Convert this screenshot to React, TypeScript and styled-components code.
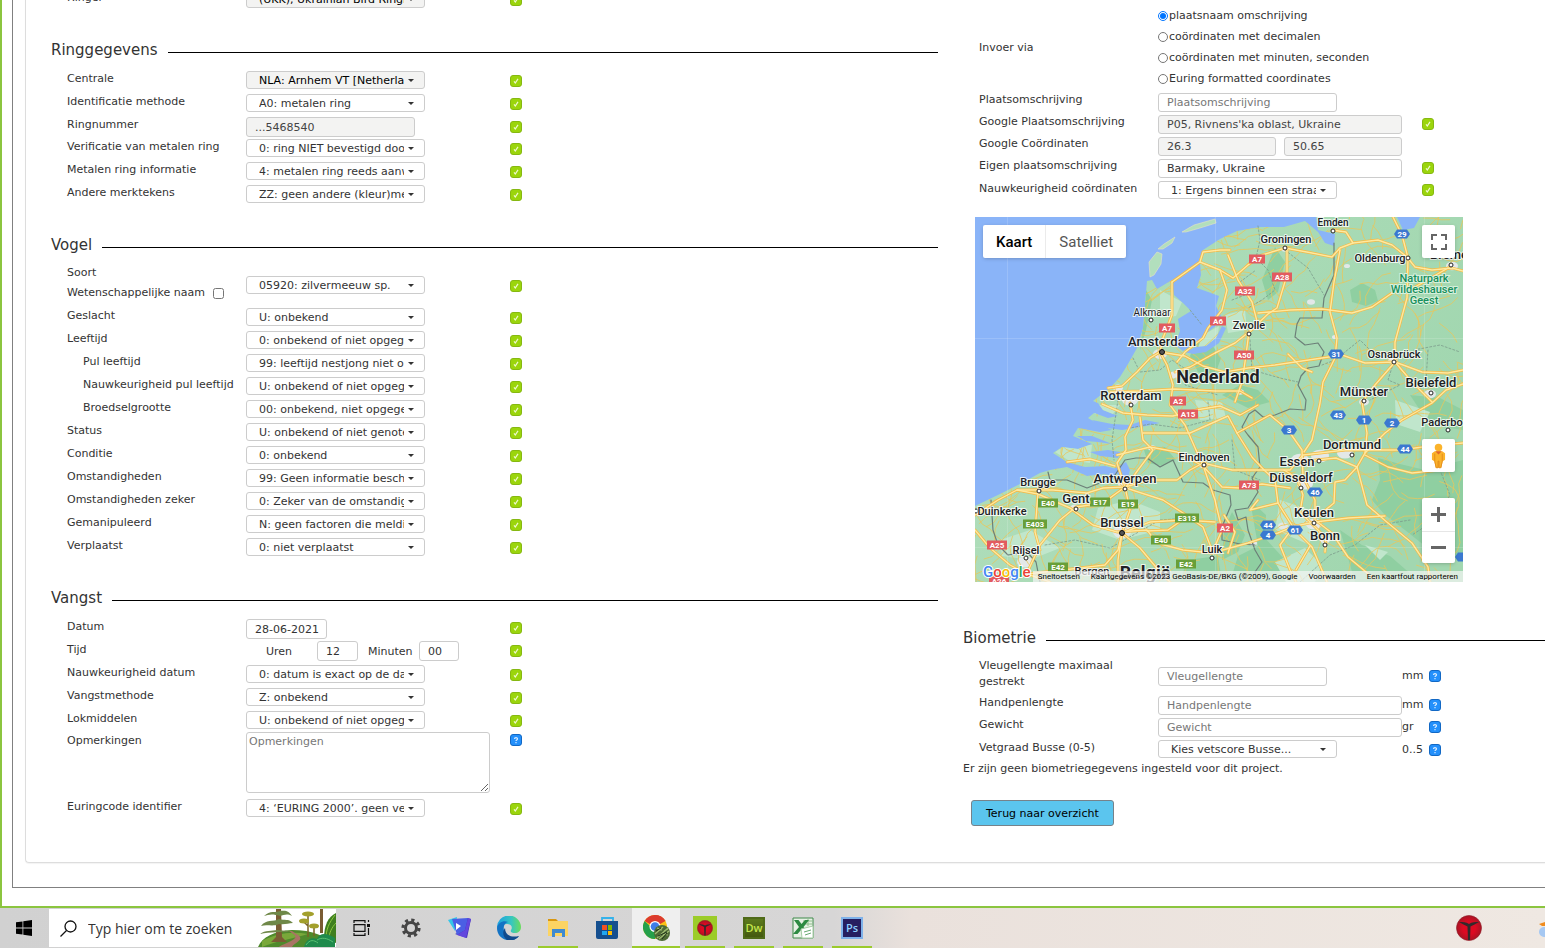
import React, { useId } from "react";
import styled, { createGlobalStyle, css } from "styled-components";

const GlobalStyle = createGlobalStyle`
  *, *::before, *::after { box-sizing: border-box; }
  body { margin: 0; background: #fff; overflow: hidden; }
  body, input, select, textarea, button {
    font-family: Verdana, "DejaVu Sans", sans-serif;
    font-size: 11px;
    color: #333;
  }
`;

const Screen = styled.div`
  display: flex;
  flex-direction: column;
  height: 100vh;
`;

const Site = styled.main`
  flex: 1;
  min-height: 0;
  overflow: hidden;
  display: flex;
  flex-direction: column;
  justify-content: flex-end;
  padding: 0 0 18px 10px;
  border: solid #8bc53f;
  border-width: 0 0 2px 2px;
`;

const Frame = styled.div`
  padding: 0 0 24px 12px;
  border: solid #808080;
  border-width: 0 0 1px 1px;
`;

const Card = styled.div`
  display: grid;
  grid-template-columns: minmax(0, 1fr) 582px;
  column-gap: 25px;
  padding: 0 0 43px 25px;
  border: solid #ddd;
  border-width: 0 0 1px 1px;
  border-radius: 0 0 0 4px;
  box-shadow: 0 1px 1px rgba(0, 0, 0, 0.05);
`;

const Column = styled.div`
  display: flex;
  flex-direction: column;
`;

const LeftColumn = styled(Column)`
  gap: 30px;
`;

const RightColumn = styled(Column)`
  justify-content: flex-end;
`;

const Heading = styled.h2`
  display: flex;
  align-items: flex-start;
  gap: 10px;
  height: 20px;
  margin: 0 0 8px;
  font-size: 15px;
  font-weight: 400;
  line-height: 20px;

  &::after {
    content: "";
    flex: 1;
    margin-top: 12px;
    border-top: 1px solid #000;
  }
`;

const Row = styled.div<{ $h?: number }>`
  display: grid;
  grid-template-columns: 179px 264px auto;
  justify-content: start;
  align-items: start;
  height: ${(p) => p.$h ?? 23}px;
  padding-left: 16px;
`;

const Label = styled.label<{ $sub?: boolean; $narrow?: boolean; $top?: number }>`
  line-height: ${(p) => (p.$narrow ? 16 : 20)}px;
  padding-top: ${(p) => p.$top ?? 1}px;
  padding-left: ${(p) => (p.$sub ? 16 : 0)}px;
  padding-right: ${(p) => (p.$narrow ? 24 : 0)}px;
  white-space: ${(p) => (p.$narrow ? "normal" : "nowrap")};
`;

const CheckLabel = styled(Label)`
  display: flex;
  align-items: center;
  gap: 8px;
  input { width: 11px; height: 11px; margin: 0; }
`;

const Control = styled.div<{ $top?: number; $gap?: number }>`
  display: flex;
  align-items: center;
  gap: ${(p) => p.$gap ?? 0}px;
  padding-top: ${(p) => p.$top ?? 3}px;
`;

const boxed = css`
  border: 1px solid #ccc;
  border-radius: 3px;
  background: #fff;
  outline: none;
  &:disabled { background: #f3f3f2; opacity: 1; }
`;

const TextInput = styled.input<{ $w: number; $h?: number }>`
  ${boxed}
  width: ${(p) => p.$w}px;
  height: ${(p) => p.$h ?? 19}px;
  padding: 0 0 0 8px;
  &::placeholder { color: #777; opacity: 1; }
  &:disabled { color: #444; }
`;

const TextArea = styled.textarea`
  ${boxed}
  width: 244px;
  height: 61px;
  padding: 2px;
  resize: both;
  &::placeholder { color: #777; opacity: 1; }
`;

const SelectBox = styled.span`
  position: relative;
  display: inline-flex;

  &::after {
    content: "";
    position: absolute;
    right: 11px;
    top: 8px;
    border: solid transparent;
    border-width: 3px 3px 0;
    border-top-color: #333;
    pointer-events: none;
  }
`;

const NativeSelect = styled.select`
  ${boxed}
  appearance: none;
  width: 179px;
  height: 18px;
  padding: 0 20px 0 12px;
  &:disabled { color: #000; }
`;

const Badge = styled.svg<{ $top: number }>`
  display: block;
  width: 12px;
  height: 12px;
  margin-top: ${(p) => p.$top}px;
`;

const UnitCell = styled.div<{ $top: number }>`
  display: grid;
  grid-template-columns: 27px 12px;
  margin-left: -20px;
  padding-top: ${(p) => p.$top}px;
  line-height: 20px;
`;

function Tick({ top = 6 }: { top?: number }) {
  return (
    <Badge $top={top} viewBox="0 0 12 12" role="img" aria-label="Geldig">
      <rect x="0.5" y="0.5" width="11" height="11" rx="2.5" fill="#9bd50c" stroke="#86b812" />
      <path d="M4 6.4 5.3 8 8 3.9" fill="none" stroke="#eef9cf" strokeWidth="1.2" />
    </Badge>
  );
}

function Help({ top = 4 }: { top?: number }) {
  return (
    <Badge $top={top} viewBox="0 0 12 12" role="img" aria-label="Help">
      <rect x="0.5" y="0.5" width="11" height="11" rx="2.5" fill="#2490fb" stroke="#1268c4" />
      <path d="M4.5 5C4.5 3.2 7.5 3.2 7.5 4.8 7.500 6 6 5.900 6 7M6 8v1.200" fill="none" stroke="#d9ecff" strokeWidth="1.200" />
    </Badge>
  );
}

function SelectField({ id, value, disabled }: { id: string; value: string; disabled?: boolean }) {
  return (
    <SelectBox>
      <NativeSelect id={id} disabled={disabled} defaultValue={value}>
        <option>{value}</option>
      </NativeSelect>
    </SelectBox>
  );
}

type SelectRowProps = { label: string; value: string; sub?: boolean; disabled?: boolean; h?: number; tickTop?: number };

function SelectRow({ label, value, sub, disabled, h, tickTop = 7 }: SelectRowProps) {
  const id = useId();
  return (
    <Row $h={h}>
      <Label htmlFor={id} $sub={sub}>{label}</Label>
      <Control><SelectField id={id} value={value} disabled={disabled} /></Control>
      <Tick top={tickTop} />
    </Row>
  );
}

type InputRowProps = { label: string; value?: string; width: number; disabled?: boolean; tick?: boolean; unit?: string; h?: number };

function InputRow({ label, value, width, disabled, tick, unit, h = 22 }: InputRowProps) {
  const id = useId();
  return (
    <Row $h={h}>
      <Label htmlFor={id}>{label}</Label>
      <Control $top={4}>
        <TextInput id={id} $w={width} defaultValue={value} placeholder={label} disabled={disabled} />
      </Control>
      {tick && <Tick top={7} />}
      {unit && <UnitCell $top={3}>{unit}<Help /></UnitCell>}
    </Row>
  );
}

/* ---------- Location ---------- */

const RadioGroup = styled.fieldset`
  display: grid;
  grid-template-columns: 179px auto;
  justify-content: start;
  align-items: center;
  margin: 0;
  padding: 0 0 0 16px;
  border: 0;
`;

const RadioList = styled.div`
  display: flex;
  flex-direction: column;
`;

const RadioLabel = styled.label`
  display: flex;
  align-items: center;
  height: 21px;
  input { width: 10px; height: 10px; margin: 0 1px 0 0; }
`;

const MapBox = styled.div`
  position: relative;
  width: 488px;
  height: 365px;
  margin: 16px 0 46px 12px;
  overflow: hidden;
  background: #8ab4f8;
  font-family: Roboto, sans-serif;
`;

const MapArt = styled.svg`
  display: block;
  width: 100%;
  height: 100%;
`;

const mapControl = css`
  position: absolute;
  background: #fff;
  border-radius: 2px;
  box-shadow: 0 1px 4px -1px rgba(0, 0, 0, 0.3);
`;

const MapTypes = styled.div`
  ${mapControl}
  top: 8px;
  left: 8px;
  display: flex;
`;

const MapTypeButton = styled.button<{ $active?: boolean }>`
  height: 33px;
  padding: 0 13px;
  border: 0;
  border-left: ${(p) => (p.$active ? "0" : "1px solid #ebebeb")};
  background: none;
  font-family: Roboto, sans-serif;
  font-size: 15px;
  font-weight: ${(p) => (p.$active ? 500 : 400)};
  color: ${(p) => (p.$active ? "#000" : "#565656")};
`;

const MapTools = styled.div<{ $top: number }>`
  ${mapControl}
  top: ${(p) => p.$top}px;
  right: 8px;
  width: 33px;
`;

const ToolButton = styled.button`
  display: flex;
  align-items: center;
  justify-content: center;
  width: 33px;
  height: 33px;
  padding: 0;
  border: 0;
  background: none;
  & + & { height: 32px; box-shadow: inset 0 1px #e6e6e6; }
`;

const Attribution = styled.div`
  position: absolute;
  right: 0;
  bottom: 0;
  display: flex;
  gap: 1px;
  height: 11px;
  line-height: 11px;
  background: rgba(245, 245, 245, 0.7);

  a {
    padding: 0 5px;
    color: #000;
    font-size: 8px;
    text-decoration: none;
  }
`;

const LAND =
  "M975 506 1000 494 1020 484 1040 473 1050 470 1067 467 1087 476 1104 474 1114 476 1120 470 1105 466 1085 467 1067 462 1053 453 1062 447 1078 449 1092 444 1073 436 1078 428 1100 432 1112 430 1098 424 1088 418 1094 413 1108 418 1118 416 1103 410 1098 403 1093 401 1110 388 1120 377 1128 364 1137 348 1143 328 1145 305 1147 281 1152 280 1157 289 1167 283 1180 276 1198 263 1203 250 1220 239 1237 231 1260 227 1284 227 1305 221 1318 232 1325 243 1334 246 1335 234 1318 230 1316 217 1397 217 1403 230 1414 228 1420 217 1463 217V582H975Z";

const LAKES = [
  "M1172 282 1200 263 1201 275 1197 288 1211 293 1219 296 1216 306 1221 316 1216 326 1206 333 1196 343 1183 351 1175 345 1180 331 1178 319 1191 311 1183 303 1174 295Z",
  "M1184 352 1196 347 1206 346 1216 338 1222 326 1226 328 1219 343 1206 352 1193 354Z",
  "M1077 436 1092 436 1112 444 1098 442 1086 441Z",
  "M1092 420 1112 424 1130 425 1145 420 1160 423 1146 426 1122 430 1100 427Z",
  "M1120 452 1108 450 1090 452 1100 456 1118 458Z",
  "M1112 470 1126 462 1130 470 1127 482 1121 477Z",
];

const ISLANDS = [
  "M1150 277 1149 262 1157 252 1162 254 1161 264 1154 275Z",
  "M1158 249 1164 244 1175 237 1172 243 1163 249Z",
  "M1182 232 1194 225 1215 219 1216 223 1200 228 1186 232Z",
];

const FORESTS = [
  "M1350 290 1362 283 1375 290 1378 301 1366 306 1352 302Z",
  "M1378 458 1400 464 1425 470 1463 460V560L1430 550 1405 530 1385 515 1372 500 1380 480Z",
  "M1196 342 1212 345 1221 358 1214 378 1198 372 1190 356Z",
  "M1250 500 1266 515 1265 538 1285 560 1310 582H1230L1238 556 1258 546Z",
  "M1340 530 1362 545 1390 556 1420 582H1355Z",
  "M1144 450 1165 447 1176 460 1162 466 1148 463Z",
  "M1222 395 1240 385 1258 390 1270 402 1248 408Z",
  "M1410 395 1440 398 1463 410V430L1430 425Z",
  "M1232 512 1245 535 1238 552 1222 560 1224 530Z",
  "M1187 560 1218 556 1222 582H1180Z",
  "M1275 247 1285 262 1278 292 1268 300 1262 280Z",
  "M1146 290 1152 300 1146 330 1140 350 1144 318Z",
];

const PALE = [
  "M1055 452 1075 440 1092 445 1090 463 1068 460Z",
  "M1090 405 1120 405 1112 415 1095 414Z",
  "M1203 335 1219 326 1217 342 1196 352Z",
  "M1160 290 1182 302 1176 316 1160 318Z",
  "M1225 315 1245 310 1247 330 1228 333Z",
  "M1098 508 1130 500 1160 512 1160 530 1120 540 1092 530Z",
  "M1280 500 1310 510 1310 545 1275 530Z",
  "M1275 562 1305 548 1322 565 1315 582H1286Z",
  "M1365 545 1388 552 1380 560Z",
  "M1195 400 1222 402 1226 418 1200 420Z",
  "M1395 400 1430 412 1420 432 1396 424Z",
  "M1000 540 1030 530 1060 548 1030 560 1002 556Z",
];

const HIGHWAYS = [
  "M1172 282 1172 315 1163 338 1160 352 1150 358 1137 372 1122 386 1108 388",
  "M1172 282 1200 262 1203 252 1220 250 1230 250M1200 262 1220 270 1233 278 1248 265 1262 255 1285 248 1312 253 1332 257 1340 248 1353 243 1378 240 1392 245 1407 257 1415 267 1432 270 1452 268 1463 271",
  "M1332 230 1346 232 1353 243M1340 250 1334 282 1330 312 1337 338 1335 358 1323 382 1320 403 1312 440 1304 452",
  "M1287 248 1287 275 1277 308 1268 314 1249 332 1235 343 1215 353 1190 367 1175 372",
  "M1258 313 1290 310 1322 309 1352 313 1372 307 1392 293 1415 287 1448 268",
  "M1160 352 1185 356 1203 366 1225 372 1248 368 1275 365 1322 358 1342 355 1365 363 1395 362 1422 372 1448 373 1463 370",
  "M1393 217 1402 235 1408 258 1407 298 1395 342 1395 362 1412 382 1432 402",
  "M1395 362 1375 385 1362 402 1367 433 1365 453 1357 467 1367 505 1388 523 1412 543 1428 567 1430 582",
  "M1228 255 1238 280 1252 302 1258 325 1249 332 1245 362 1242 382 1235 402",
  "M1220 270 1227 290 1222 310 1208 328 1203 338 1185 352 1177 362",
  "M1160 352 1167 365 1173 385 1170 405 1185 425 1196 450 1204 468 1215 500 1222 530 1212 553",
  "M1110 392 1140 391 1175 389 1215 391 1240 391 1252 398",
  "M1102 404 1123 413 1147 415 1173 416 1196 410 1220 406 1240 415 1258 405",
  "M1130 403 1133 420 1125 437 1126 450 1117 463 1125 487 1130 510 1122 533 1118 560 1118 582",
  "M1140 417 1143 440 1153 450 1138 470 1126 487",
  "M1067 462 1090 459 1115 466M1117 455 1150 447 1177 452 1203 466",
  "M1143 433 1190 433 1210 424 1228 416 1237 433 1252 457 1264 470",
  "M975 515 998 500 1017 490 1053 490 1087 493 1103 488 1125 487 1150 480 1177 480 1190 470 1203 463 1232 470 1290 470 1303 455 1345 450 1380 450 1400 450 1430 446 1463 443",
  "M1126 488 1163 500 1183 513 1203 527 1212 550",
  "M1017 490 1038 494 1070 508 1093 525 1117 532 1147 530 1157 543 1183 550 1212 553 1248 543 1278 533 1295 526 1315 522 1348 518 1385 516",
  "M1125 487 1103 503 1076 507 1060 520 1040 545 1027 573",
  "M1038 492 1035 532 1040 550M1027 574 1063 570 1105 565 1118 550 1122 533 1150 522 1183 520 1215 522",
  "M975 530 990 548 1010 565 1027 574 1050 582",
  "M1122 533 1140 548 1160 572 1170 582M1147 531 1168 530 1188 516",
  "M1237 433 1270 415 1288 430 1302 450 1303 477 1315 500 1315 520 1332 533 1348 557 1372 577",
  "M1264 470 1275 480 1278 503 1295 530 1312 547 1327 582",
  "M1284 470 1297 478 1303 495 1300 512 1312 524 1326 538 1325 552",
  "M1290 462 1316 460 1336 458 1357 467 1345 480 1335 482 1334 503 1318 516",
  "M1365 455 1388 467 1412 473 1440 470M1365 453 1385 433 1402 420 1432 403 1446 390 1463 384",
  "M1295 525 1280 545 1290 570 1296 582M1310 546 1296 570",
  "M1203 466 1222 487 1240 488 1262 484 1290 488M1228 553 1235 532 1224 515",
  "M1288 354 1302 368 1312 372M1258 500 1250 510 1278 503",
];

const BORDERS = [
  "M1334 243 1334 275 1324 298 1322 318 1300 318 1297 324 1295 337 1305 345 1318 343 1324 352 1319 366 1308 368 1301 376 1298 385 1306 400 1305 410 1290 409 1275 415 1263 417 1255 410 1249 414 1242 427 1248 435 1258 447 1260 467 1252 478 1258 492 1248 508 1235 510 1238 520 1246 517 1248 530 1255 550 1262 562 1255 572 1257 582",
  "M1048 472 1050 480 1067 480 1087 488 1113 478 1125 460 1136 458 1147 458 1160 467 1173 460 1183 482 1203 483 1213 490 1230 495 1231 505 1222 527 1222 540 1240 544 1255 545",
  "M991 500 993 530 998 545 1008 555 1027 552 1036 562 1040 582",
];

const PROVINCES = [
  "M1258 226 1260 240 1256 258 1268 270 1275 290 1262 300 1248 308",
  "M1285 250 1308 268 1324 295M1232 300 1245 295 1240 282 1256 270",
  "M1133 358 1140 372 1160 370 1172 360 1187 370 1185 385 1218 395",
  "M1250 340 1252 370 1280 378 1298 382M1208 402 1210 420 1180 428 1150 424 1130 428",
  "M1322 365 1335 360 1360 340 1372 352 1395 358 1388 380 1400 385 1370 400",
  "M1414 350 1440 345 1460 352M1426 380 1428 350",
  "M1118 400 1112 440 1114 460M1045 545 1075 540 1110 548 1160 520 1190 518",
  "M1232 440 1235 470 1260 480M1300 582 1330 555 1355 545 1380 525 1410 520",
  "M1440 470 1450 495 1435 520 1412 535",
  "M1190 310 1202 325",
];

/* Fixed-seed generator: the fine road mesh is the same on every load. */
function minorRoads(): string {
  let seed = 71;
  const next = () => {
    seed = (seed * 16807) % 2147483647;
    return seed / 2147483647;
  };
  let d = "";
  for (let i = 0; i < 480; i++) {
    let x = 975 + next() * 488;
    let y = 217 + next() * 365;
    let angle = next() * Math.PI * 2;
    d += `M${x.toFixed(1)} ${y.toFixed(1)}`;
    const steps = 3 + Math.floor(next() * 4);
    for (let s = 0; s < steps; s++) {
      angle += (next() - 0.5) * 1.1;
      x += Math.cos(angle) * 9;
      y += Math.sin(angle) * 9;
      d += `L${x.toFixed(1)} ${y.toFixed(1)}`;
    }
  }
  return d;
}

const MINOR = minorRoads();

const URBAN: [number, number, number][] = [
  [1160, 354, 7], [1130, 400, 8], [1118, 388, 5], [1174, 375, 5], [1125, 484, 7], [1122, 532, 9], [1075, 508, 5],
  [1300, 460, 9], [1320, 456, 9], [1345, 453, 8], [1305, 484, 8], [1314, 524, 8], [1325, 540, 5], [1283, 526, 5],
  [1393, 361, 5], [1364, 402, 5], [1430, 394, 6], [1452, 266, 6], [1285, 249, 4], [1204, 465, 5], [1152, 448, 4],
  [1025, 562, 8], [1212, 552, 4], [1240, 392, 4], [1311, 302, 4], [1347, 266, 3], [1253, 543, 4], [1335, 337, 3],
];

type Shield = [string, number, number, "nl" | "be" | "de"];
const SHIELDS: Shield[] = [
  ["A7", 1257, 259, "nl"], ["A28", 1282, 277, "nl"], ["A32", 1245, 291, "nl"], ["A7", 1167, 328, "nl"],
  ["A6", 1218, 321, "nl"], ["A50", 1244, 355, "nl"], ["A2", 1178, 401, "nl"], ["A15", 1188, 414, "nl"],
  ["A73", 1249, 485, "nl"], ["A2", 1225, 528, "nl"], ["A25", 997, 545, "nl"], ["A26", 999, 581, "nl"],
  ["E40", 1048, 503, "be"], ["E17", 1100, 502, "be"], ["E19", 1128, 504, "be"], ["E403", 1035, 524, "be"],
  ["E313", 1187, 518, "be"], ["E40", 1161, 540, "be"], ["E42", 1058, 567, "be"], ["E42", 1186, 564, "be"],
  ["29", 1402, 234, "de"], ["31", 1336, 354, "de"], ["43", 1338, 415, "de"], ["1", 1364, 420, "de"],
  ["2", 1392, 423, "de"], ["3", 1289, 430, "de"], ["44", 1405, 449, "de"], ["46", 1315, 492, "de"],
  ["44", 1268, 525, "de"], ["4", 1268, 535, "de"], ["61", 1295, 530, "de"], ["", 1463, 557, "de"],
];

type Place = [string, number, number, number, number, number?, number?];
/* name, text centre x, baseline y, size, weight, dot x, dot y */
const PLACES: Place[] = [
  ["Emden", 1333, 226, 10, 500, 1333, 231], ["Groningen", 1286, 243, 11, 500, 1285, 248],
  ["Oldenburg", 1380, 262, 11, 500, 1408, 258], ["Breme", 1449, 259, 13, 500, 1451, 265],
  ["Alkmaar", 1152, 316, 10, 400, 1151, 320], ["Amsterdam", 1162, 346, 13, 500, 1162, 352],
  ["Zwolle", 1249, 329, 11, 500, 1249, 334], ["Nederland", 1218, 383, 18, 700],
  ["Rotterdam", 1131, 400, 13, 500, 1131, 405], ["Osnabrück", 1394, 358, 11, 500, 1394, 362],
  ["Bielefeld", 1431, 387, 13, 500, 1431, 393], ["Münster", 1364, 396, 13, 500, 1364, 401],
  ["Paderbo", 1442, 426, 11, 500, 1448, 430], ["Dortmund", 1352, 449, 13, 500, 1352, 455],
  ["Essen", 1297, 466, 13, 500, 1319, 461], ["Düsseldorf", 1301, 482, 13, 500, 1301, 488],
  ["Keulen", 1314, 517, 13, 500, 1314, 523], ["Bonn", 1325, 540, 13, 500, 1325, 545],
  ["Eindhoven", 1204, 461, 11, 500, 1204, 465], ["Brugge", 1038, 486, 11, 500, 1039, 491],
  ["Antwerpen", 1125, 483, 13, 500, 1125, 489], ["Gent", 1076, 503, 13, 500, 1076, 509],
  ["Duinkerke", 1002, 515, 11, 500, 976, 511], ["Brussel", 1122, 527, 13, 500, 1122, 533],
  ["Rijsel", 1026, 554, 11, 500, 1026, 558], ["Luik", 1212, 553, 11, 500, 1212, 558],
  ["Bergen", 1092, 575, 11, 500], ["België", 1145, 579, 18, 700],
];

const SHIELD_FILL = { nl: "#e25b5f", be: "#689f38", de: "#3b78d0" };

function MapDrawing() {
  return (
    <MapArt viewBox="975 217 488 365" role="img" aria-label="Kaart van Nederland">
      <defs>
        <clipPath id="land"><path d={LAND} /></clipPath>
        <linearGradient id="ground" x1="0" x2="1" y1="0" y2="0.4">
          <stop offset="0" stopColor="#b2dfbd" />
          <stop offset="1" stopColor="#a2d7b0" />
        </linearGradient>
      </defs>
      <rect x="975" y="217" width="488" height="365" fill="#8ab4f8" />
      <path d={LAND} fill="url(#ground)" />
      <g clipPath="url(#land)">
        {FORESTS.map((d) => <path key={d} d={d} fill="#8fcfa1" />)}
        {PALE.map((d) => <path key={d} d={d} fill="#c0e6cc" />)}
        {URBAN.map(([x, y, r]) => <ellipse key={`${x}-${y}`} cx={x} cy={y} rx={r} ry={r * 0.7} fill="#e3e8e8" />)}
        <path d={MINOR} fill="none" stroke="#e8c65c" strokeWidth="0.8" strokeLinejoin="round" />
      </g>
      {LAKES.map((d) => <path key={d} d={d} fill="#8ab4f8" />)}
      {ISLANDS.map((d) => <path key={d} d={d} fill="#b2dfbd" stroke="#e9e3c4" strokeWidth="0.6" />)}
      <g fill="none" strokeLinejoin="round" strokeLinecap="round">
        {PROVINCES.map((d) => <path key={d} d={d} stroke="#7c9c8b" strokeWidth="0.8" strokeDasharray="2 2" />)}
        {BORDERS.map((d) => <path key={d} d={d} stroke="#6c7f78" strokeWidth="1.2" />)}
        {HIGHWAYS.map((d) => <path key={d} d={d} stroke="#f5b944" strokeWidth="2.8" />)}
        {HIGHWAYS.map((d) => <path key={d} d={d} stroke="#fde9a0" strokeWidth="1.4" />)}
      </g>
      <path d="M1007.5 217V582M1215.5 217V582M1424.500 217V582M975 338.500H1463M975 547.500H1463" stroke="#fff" strokeOpacity="0.15" />
      {SHIELDS.map(([text, x, y, kind]) => {
        const w = text.length * 4 + 8;
        return (
          <g key={`${text}-${x}-${y}`}>
            {kind === "de" ? (
              <path d={`M${x - 8} ${y}l3-4.500h10l3 4.500-3 4.500h-10z`} fill={SHIELD_FILL.de} />
            ) : (
              <rect x={x - w / 2} y={y - 4.5} width={w} height="9" fill={SHIELD_FILL[kind]} />
            )}
            <text x={x} y={y + 3} fontSize="8" fontWeight="700" fill="#fff" textAnchor="middle">{text}</text>
          </g>
        );
      })}
      <g textAnchor="middle" fill="#188f5b" stroke="#d6f0dd" strokeWidth="2" paintOrder="stroke" fontSize="11" fontWeight="500">
        <text x="1424" y="282">Naturpark</text>
        <text x="1424" y="293">Wildeshauser</text>
        <text x="1424" y="304">Geest</text>
      </g>
      {PLACES.map(([name, x, y, size, weight, dx, dy]) => (
        <g key={name}>
          {dx !== undefined && <circle cx={dx} cy={dy} r="2" fill="#fff" stroke="#222" strokeWidth="1" />}
          <text x={x} y={y} fontSize={size} fontWeight={weight} fill="#202124" stroke="#fff" strokeOpacity="0.8" strokeWidth="2" paintOrder="stroke" textAnchor="middle">{name}</text>
        </g>
      ))}
      <circle cx="1162" cy="352" r="2.500" fill="#555" stroke="#111" />
      <circle cx="1122" cy="533" r="2.500" fill="#555" stroke="#111" />
      <text x="983" y="577" fontSize="15" fontWeight="500" stroke="#fff" strokeWidth="2" paintOrder="stroke">
        <tspan fill="#4285f4">G</tspan><tspan fill="#ea4335">o</tspan><tspan fill="#fbbc04">o</tspan>
        <tspan fill="#4285f4">g</tspan><tspan fill="#34a853">l</tspan><tspan fill="#ea4335">e</tspan>
      </text>
    </MapArt>
  );
}

function MapPanel() {
  return (
    <MapBox>
      <MapDrawing />
      <MapTypes>
        <MapTypeButton $active>Kaart</MapTypeButton>
        <MapTypeButton>Satelliet</MapTypeButton>
      </MapTypes>
      <MapTools $top={8}>
        <ToolButton aria-label="Volledig scherm">
          <svg width="16" height="16" viewBox="0 0 16 16" fill="none" stroke="#666" strokeWidth="2">
            <path d="M1 6V1h5M10 1h5v5M15 10v5h-5M6 15H1v-5" />
          </svg>
        </ToolButton>
      </MapTools>
      <MapTools $top={222}>
        <ToolButton aria-label="Street View">
          <svg width="15" height="26" viewBox="0 0 16 27">
            <path d="M4 8.500 1 10.500v7l2.500 1.500L5 26h6l1.500-7 2.500-1.500v-7L12 8.500Z" fill="#fbb32b" />
            <path d="M4 11v8L5.500 26H7.500v-7h1v7H10.500l1.500-7v-8" fill="none" stroke="#e38c1c" strokeWidth="1" />
            <circle cx="8" cy="4.500" r="4" fill="#fbb32b" />
            <path d="M4.500 8.500h7L8 12Z" fill="#e0672b" />
          </svg>
        </ToolButton>
      </MapTools>
      <MapTools $top={281}>
        <ToolButton aria-label="Inzoomen">
          <svg width="15" height="15" viewBox="0 0 15 15" stroke="#666" strokeWidth="3"><path d="M0 7.500h15M7.500 0v15" /></svg>
        </ToolButton>
        <ToolButton aria-label="Uitzoomen">
          <svg width="15" height="15" viewBox="0 0 15 15" stroke="#666" strokeWidth="3"><path d="M0 7.500h15" /></svg>
        </ToolButton>
      </MapTools>
      <Attribution>
        <a href="#toetsen">Sneltoetsen</a>
        <a href="#gegevens">Kaartgegevens ©2023 GeoBasis-DE/BKG (©2009), Google</a>
        <a href="#voorwaarden">Voorwaarden</a>
        <a href="#kaartfout">Een kaartfout rapporteren</a>
      </Attribution>
    </MapBox>
  );
}

const Note = styled.p`
  margin: 0;
  line-height: 18px;
`;

const BackButton = styled.button`
  align-self: flex-start;
  height: 26px;
  margin: 22px 0 -7px 8px;
  padding: 0 14px;
  border: 1px solid #76828a;
  border-radius: 3px;
  background: #5bc5ee;
  color: #000;
`;

/* ---------- Taskbar ---------- */

const Taskbar = styled.footer`
  display: flex;
  align-items: stretch;
  height: 40px;
  flex: none;
  background: linear-gradient(90deg, #d1d1d1 0, #d7d6d6 54%, #eae1dc 59%, #efe8e2 100%);
`;

const TaskButton = styled.button<{ $open?: boolean; $active?: boolean }>`
  display: flex;
  align-items: center;
  justify-content: center;
  width: ${(p) => (p.$active ? 48 : 40)}px;
  margin: 0 ${(p) => (p.$active ? 0 : 4)}px;
  padding: 2px 0 0;
  border: 0;
  border-bottom: 2px solid ${(p) => (p.$open ? "#9bcb2c" : "transparent")};
  background: ${(p) => (p.$active ? "#efefef" : "none")};
`;

const StartButton = styled(TaskButton)`
  width: 48px;
  margin: 0 1px 0 0;
`;

const Apps = styled.nav`
  display: flex;
  gap: 1px;
`;

const Search = styled.label`
  display: flex;
  align-items: center;
  width: 287px;
  padding-left: 11px;
  margin: 1px 2px 1px 0;
  background: #fff;

  input {
    flex: 1;
    min-width: 0;
    padding: 0 0 0 11px;
    border: 0;
    background: none;
    font-family: "Segoe UI", "Open Sans", sans-serif;
    font-size: 14px;
  }
  input::placeholder { color: #333; opacity: 1; }
`;

const Tray = styled.div`
  display: flex;
  align-items: center;
  gap: 57px;
  margin-left: auto;
`;

function ForestArt() {
  return (
    <svg width="78" height="38" viewBox="0 0 78 38">
      <path d="M0 38C4 28 16 22 34 21c20 0 36 6 43 17Z" fill="#4f8a2c" />
      <path d="M4 32C18 24 34 22 50 25 34 30 18 32 4 38Z" fill="#79a83a" />
      <path d="M31 22c6 4 10 6 2 10-6 3-10 4-12 6h13c2-4 10-6 8-10-2-3-6-4-8-6Z" fill="#a87464" />
      <path d="M18 0h5l1 28 5 5H13l5-5ZM62 0h3v24h-3Z" fill="#7a5c33" />
      <g fill="#6f8848">
        <path d="M6 7C12 1 18 4 22 2c6-1 9 0 12 5-5-3-8-1-12 0-6-2-11-2-16 0Z" />
        <path d="M3 17c5-7 12-4 18-7 6 2 9-1 14 4-5 0-8 2-14 1-6 3-12 0-18 2Z" />
        <path d="M2 25c5-4 12-3 17-4 6 1 9 0 13 2-8 0-20 0-30 2Z" />
      </g>
      <path d="M50 6v22M56 18v9M46 13l4 4" fill="none" stroke="#7a6425" strokeWidth="1.500" />
      <g fill="#a3a02c">
        <ellipse cx="50" cy="5" rx="6" ry="2.500" /><ellipse cx="46" cy="12" rx="5" ry="2.500" /><ellipse cx="56" cy="17" rx="5" ry="2.500" />
      </g>
      <path d="M78 4c-8 4-12 12-12 26l12 4Z" fill="#3f7f1f" />
      <path d="M77 6c-6 8-9 14-9 24M78 14c-4 4-7 10-7 16" stroke="#8cc63f" fill="none" />
      <path d="M46 38c2-8 8-10 13-8 3-7 10-6 18-1v9Z" fill="#1f8a4c" />
      <path d="M48 36c4-6 8-5 12-2M59 31c5-3 10-2 16 2" stroke="#59c071" fill="none" />
    </svg>
  );
}

function BirdDisc({ size }: { size: number }) {
  return (
    <svg width={size} height={size} viewBox="0 0 26 26">
      <defs>
        <radialGradient id="disc"><stop offset="0.500" stopColor="#dd0a22" /><stop offset="1" stopColor="#a81424" /></radialGradient>
      </defs>
      <circle cx="13" cy="13" r="12.500" fill="url(#disc)" stroke="#8c1a24" strokeWidth="0.600" />
      <path d="M3 7c4 0 7 0 10 2 3-2 6-2 10-2-3 2-6 3-8.500 4.500L14 25h-2l-.500-13.500C9 10 6 9 3 7Z" fill="#332a2c" />
    </svg>
  );
}

function AppIcons() {
  return (
    <Apps>
      <TaskButton aria-label="Taakweergave">
        <svg width="18" height="16" viewBox="0 0 18 16" fill="none" stroke="#111" strokeWidth="1.200">
          <path d="M1 3V.6h11V3M1 13v2.400h11V13M1 4.600h11v6.800H1ZM15.500 0v2M15.500 8v7" />
          <path d="M14 4h3v3h-3Z" fill="#111" stroke="none" />
        </svg>
      </TaskButton>
      <TaskButton aria-label="Instellingen">
        <svg width="20" height="20" viewBox="0 0 20 20" fill="none" stroke="#454545">
          <circle cx="10" cy="10" r="5.500" strokeWidth="3" />
          <circle cx="10" cy="10" r="8" strokeWidth="3.200" strokeDasharray="3.140 3.140" />
        </svg>
      </TaskButton>
      <TaskButton aria-label="Video-editor">
        <svg width="24" height="22" viewBox="0 0 24 22">
          <path d="M0 3 9 0l-2 14Z" fill="#35c6e8" />
          <path d="m19 1 4 1-4 19-12-4 9-4Z" fill="#4432b8" />
          <path d="M4 2 20 1l-3 12-8 5Z" fill="#4b5fe4" />
          <path d="m9 18 8-5 3-12 3 1-5 19Z" fill="#6247de" />
          <path d="m8 6 5 3-5 4Z" fill="#fff" />
        </svg>
      </TaskButton>
      <TaskButton aria-label="Edge">
        <svg width="24" height="24" viewBox="0 0 24 24">
          <defs>
            <linearGradient id="edge"><stop offset="0" stopColor="#1ba0e1" /><stop offset="0.600" stopColor="#37c6c0" /><stop offset="1" stopColor="#6bdc5c" /></linearGradient>
          </defs>
          <path d="M0 12A12 12 0 0 1 24 11c0 4-3 6-6 6-3 0-5-1-4-3 2-3 0-6-4-6C4 8 1 12 0 12Z" fill="url(#edge)" />
          <path d="M0 12c1-6 7-8 11-6-5 1-6 9-1 14 3 3 8 3 12 0-3 4-8 5-12 4C4 23 0 18 0 12Z" fill="#1473c4" />
          <path d="M8 12c0 7 6 10 14 8-3 4-8 5-12 4-4-3-5-8-2-12Z" fill="#114a8c" />
        </svg>
      </TaskButton>
      <TaskButton $open aria-label="Verkenner">
        <svg width="22" height="20" viewBox="0 0 22 20">
          <path d="M1 1h8l2 2H1Z" fill="#d9970f" />
          <path d="M1 3h20v15H1Z" fill="#fcd462" />
          <path d="M5 19v-8h13v8h-3v-4H8v4Z" fill="#3f8ad0" />
        </svg>
      </TaskButton>
      <TaskButton aria-label="Microsoft Store">
        <svg width="24" height="24" viewBox="0 0 24 24">
          <path d="M7 6V2h11v4" fill="none" stroke="#35b2ea" strokeWidth="1.800" />
          <path d="M1 5h22v16q0 2-2 2H3q-2 0-2-2Z" fill="#154f8f" />
          <path d="M7 9h5v5H7Z" fill="#f25022" /><path d="M13 9h4v5h-4Z" fill="#7fba00" />
          <path d="M7 15h5v4H7Z" fill="#22a7f0" /><path d="M13 15h4v4h-4Z" fill="#ffb900" />
        </svg>
      </TaskButton>
      <TaskButton $open $active aria-label="Chrome">
        <svg width="27" height="26" viewBox="0 0 27 26">
          <circle cx="12" cy="12" r="12" fill="#fbc116" />
          <path d="M12 12 1.600 6A12 12 0 0 1 22.400 6Z" fill="#dc3b2e" /><path d="M12 0a12 12 0 0 1 10.400 6H12Z" fill="#dc3b2e" />
          <path d="M1.600 6A12 12 0 0 0 12 24l4-8-4-2-5-3Z" fill="#25a04b" />
          <circle cx="12" cy="11.500" r="5.500" fill="#fff" /><circle cx="12" cy="11.500" r="4.300" fill="#3f7de8" />
          <circle cx="19" cy="18" r="8" fill="#4d6a35" />
          <path d="m12 19 8-7m-6 11 11-10m-9 11 10-8m-12-3 5 2m2 1 4-2m-5 5 5 1" stroke="#a0bd72" strokeWidth="1.200" />
          <path d="m13 16 5-3m-3 8 9-4m-5 7 5-6" stroke="#22331b" />
        </svg>
      </TaskButton>
      <TaskButton $open aria-label="Ringdatabase"><GreenTile><BirdDisc size={16} /></GreenTile></TaskButton>
      <TaskButton $open aria-label="Dreamweaver"><Tile $bg="linear-gradient(#5c7a1c, #44590f)" $fg="#c5e84d" $edge="#4f6a18">Dw</Tile></TaskButton>
      <TaskButton $open aria-label="Excel">
        <svg width="22" height="22" viewBox="0 0 22 22">
          <path d="M1 1h20v20H1Z" fill="#e7f1e5" stroke="#3e8a4a" />
          <path d="M11 4h9M11 7h9M16 2v7" stroke="#8dbf8a" />
          <path d="M2 3h4.500l3 4L13 3h4l-5.500 7 5.500 7h-4.500L9 13l-3.500 4H1l6-7Z" fill="#2d8a42" />
          <path d="m9 12 12-3v12H10Z" fill="#fff" stroke="#a7cda5" /><path d="m12 15 7-2m-6 5 6-2" stroke="#67a972" />
        </svg>
      </TaskButton>
      <TaskButton $open aria-label="Photoshop"><Tile $bg="#261f60" $fg="#8ed0ff" $edge="#7fb2ea">Ps</Tile></TaskButton>
    </Apps>
  );
}

const Tile = styled.span<{ $bg: string; $fg: string; $edge: string }>`
  width: 22px;
  height: 22px;
  border: 2px solid ${(p) => p.$edge};
  background: ${(p) => p.$bg};
  color: ${(p) => p.$fg};
  font: 600 11px/17px "Open Sans", sans-serif;
  text-align: center;
`;

const GreenTile = styled.span`
  display: flex;
  align-items: center;
  justify-content: center;
  width: 24px;
  height: 24px;
  background: #9ccc28;
`;

const TimeLabel = styled.span<{ $w: number; $indent: number }>`
  width: ${(p) => p.$w}px;
  padding-left: ${(p) => p.$indent}px;
`;

export default function App() {
  const id = useId();
  return (
    <Screen>
      <GlobalStyle />
      <Site>
        <Frame>
          <Card>
            <LeftColumn>
              <SelectRow label="Ringer" value="(UKK), Ukrainian Bird Ringing Centre" disabled />
              <section>
                <Heading>Ringgegevens</Heading>
                <SelectRow label="Centrale" value="NLA: Arnhem VT [Netherlands]" disabled />
                <SelectRow label="Identificatie methode" value="A0: metalen ring" />
                <Row $h={22}>
                  <Label htmlFor={`${id}-ring`}>Ringnummer</Label>
                  <Control><TextInput id={`${id}-ring`} $w={169} $h={20} defaultValue="...5468540" disabled /></Control>
                  <Tick top={7} />
                </Row>
                <SelectRow label="Verificatie van metalen ring" value="0: ring NIET bevestigd door" />
                <SelectRow label="Metalen ring informatie" value="4: metalen ring reeds aanwezig" />
                <SelectRow label="Andere merktekens" value="ZZ: geen andere (kleur)merken" />
              </section>
              <section>
                <Heading>Vogel</Heading>
                <Row $h={42}>
                  <div>
                    <Label as="div" $top={0}>Soort</Label>
                    <CheckLabel $top={0}>Wetenschappelijke naam<input type="checkbox" /></CheckLabel>
                  </div>
                  <Control $top={13}><SelectField id={`${id}-soort`} value="05920: zilvermeeuw sp." /></Control>
                  <Tick top={17} />
                </Row>
                <SelectRow label="Geslacht" value="U: onbekend" />
                <SelectRow label="Leeftijd" value="0: onbekend of niet opgegeven" />
                <SelectRow label="Pul leeftijd" value="99: leeftijd nestjong niet opgegeven" sub />
                <SelectRow label="Nauwkeurigheid pul leeftijd" value="U: onbekend of niet opgegeven" sub />
                <SelectRow label="Broedselgrootte" value="00: onbekend, niet opgegeven" sub />
                <SelectRow label="Status" value="U: onbekend of niet genoteerd" />
                <SelectRow label="Conditie" value="0: onbekend" />
                <SelectRow label="Omstandigheden" value="99: Geen informatie beschikbaar" />
                <SelectRow label="Omstandigheden zeker" value="0: Zeker van de omstandigheden" />
                <SelectRow label="Gemanipuleerd" value="N: geen factoren die melding" />
                <SelectRow label="Verplaatst" value="0: niet verplaatst" />
              </section>
              <section>
                <Heading>Vangst</Heading>
                <Row>
                  <Label htmlFor={`${id}-datum`}>Datum</Label>
                  <Control><TextInput id={`${id}-datum`} $w={81} $h={20} defaultValue="28-06-2021" /></Control>
                  <Tick />
                </Row>
                <Row>
                  <Label as="div">Tijd</Label>
                  <Control $top={2}>
                    <TimeLabel $w={71} $indent={20}>Uren</TimeLabel>
                    <TextInput aria-label="Uren" $w={41} $h={20} defaultValue="12" />
                    <TimeLabel $w={61} $indent={10}>Minuten</TimeLabel>
                    <TextInput aria-label="Minuten" $w={40} $h={20} defaultValue="00" />
                  </Control>
                  <Tick />
                </Row>
                <SelectRow label="Nauwkeurigheid datum" value="0: datum is exact op de dag" />
                <SelectRow label="Vangstmethode" value="Z: onbekend" />
                <SelectRow label="Lokmiddelen" value="U: onbekend of niet opgegeven" h={22} />
                <Row $h={66}>
                  <Label htmlFor={`${id}-opm`}>Opmerkingen</Label>
                  <Control $top={2}><TextArea id={`${id}-opm`} placeholder="Opmerkingen" /></Control>
                  <Help />
                </Row>
                <SelectRow label="Euringcode identifier" value="4: ‘EURING 2000’. geen verdere" />
              </section>
            </LeftColumn>

            <RightColumn>
              <RadioGroup>
                <span>Invoer via</span>
                <RadioList>
                  <RadioLabel><input type="radio" name="invoer" defaultChecked />plaatsnaam omschrijving</RadioLabel>
                  <RadioLabel><input type="radio" name="invoer" />coördinaten met decimalen</RadioLabel>
                  <RadioLabel><input type="radio" name="invoer" />coördinaten met minuten, seconden</RadioLabel>
                  <RadioLabel><input type="radio" name="invoer" />Euring formatted coordinates</RadioLabel>
                </RadioList>
              </RadioGroup>
              <InputRow label="Plaatsomschrijving" width={179} />
              <InputRow label="Google Plaatsomschrijving" value="P05, Rivnens'ka oblast, Ukraine" width={244} disabled tick />
              <Row $h={22}>
                <Label htmlFor={`${id}-lon`}>Google Coördinaten</Label>
                <Control $top={4} $gap={8}>
                  <TextInput id={`${id}-lon`} $w={118} defaultValue="26.3" disabled />
                  <TextInput aria-label="Google breedtegraad" $w={118} defaultValue="50.65" disabled />
                </Control>
              </Row>
              <InputRow label="Eigen plaatsomschrijving" value="Barmaky, Ukraine" width={244} tick h={23} />
              <SelectRow label="Nauwkeurigheid coördinaten" value="1: Ergens binnen een straal" tickTop={6} />
              <MapPanel />
              <Heading>Biometrie</Heading>
              <Row $h={36}>
                <Label htmlFor={`${id}-vleugel`} $narrow $top={2}>Vleugellengte maximaal gestrekt</Label>
                <Control $top={11}><TextInput id={`${id}-vleugel`} $w={169} placeholder="Vleugellengte" /></Control>
                <UnitCell $top={10}>mm<Help /></UnitCell>
              </Row>
              <InputRow label="Handpenlengte" width={244} unit="mm" />
              <InputRow label="Gewicht" width={244} unit="gr" h={23} />
              <Row>
                <Label htmlFor={`${id}-vet`}>Vetgraad Busse (0-5)</Label>
                <Control><SelectField id={`${id}-vet`} value="Kies vetscore Busse..." /></Control>
                <UnitCell $top={3}>0..5<Help /></UnitCell>
              </Row>
              <Note>Er zijn geen biometriegegevens ingesteld voor dit project.</Note>
              <BackButton>Terug naar overzicht</BackButton>
            </RightColumn>
          </Card>
        </Frame>
      </Site>
      <Taskbar>
        <StartButton aria-label="Start">
          <svg width="16" height="16" viewBox="0 0 16 16"><path d="M0 2.300 6.500 1.400V7.600H0ZM7.300 1.300 16 0V7.600H7.300ZM0 8.400H6.500V14.600L0 13.700ZM7.300 8.400H16V16L7.300 14.700Z" /></svg>
        </StartButton>
        <Search>
          <svg width="17" height="17" viewBox="0 0 17 17" fill="none" stroke="#111" strokeWidth="1.300"><circle cx="10.500" cy="6.500" r="5.500" /><path d="m6.500 10.500-6 6" /></svg>
          <input placeholder="Typ hier om te zoeken" aria-label="Zoeken" />
          <ForestArt />
        </Search>
        <AppIcons />
        <Tray>
          <BirdDisc size={26} />
          <svg width="6" height="26" viewBox="0 0 6 26">
            <path d="M0 9l6-2v4H3Z" fill="#ef8b1d" /><path d="M6 12c-4 0-6 2-6 5s3 5 6 5Z" fill="#a6c8f2" />
          </svg>
        </Tray>
      </Taskbar>
    </Screen>
  );
}
